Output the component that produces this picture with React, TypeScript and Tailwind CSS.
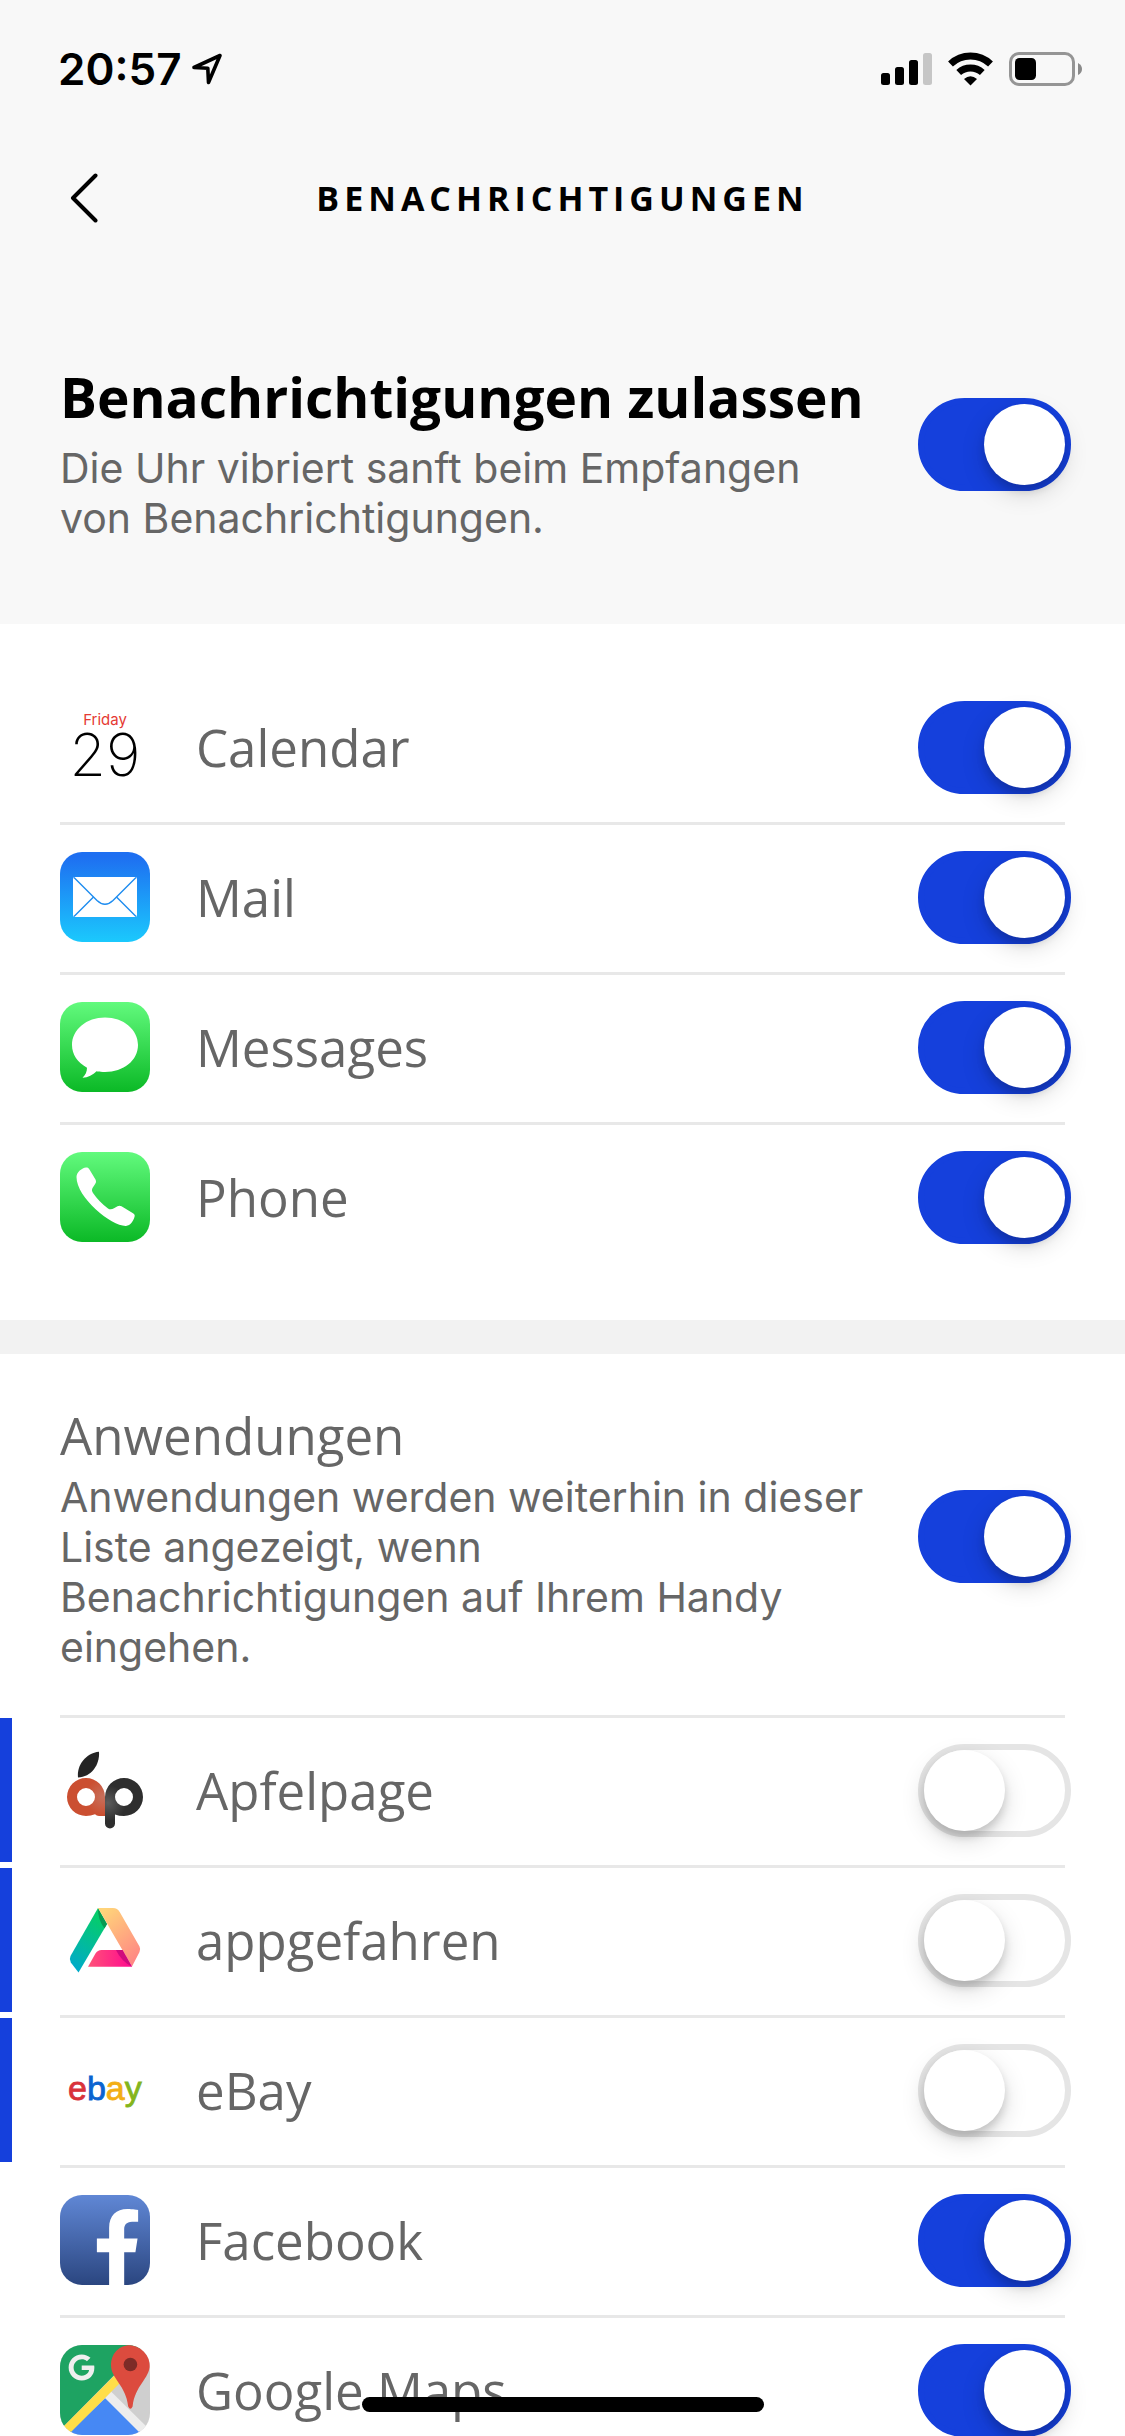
import React, { useState } from 'react';
import { FaFacebookF, FaGoogle } from 'react-icons/fa';

interface AppItem {
  id: string;
  name: string;
  icon: React.ReactNode;
  enabled: boolean;
  isNew?: boolean;
}

const CalendarIcon = () => (
  <svg viewBox="0 0 90 90" className="size-full">
    <text x="45" y="23" textAnchor="middle" fontSize="15" fill="#e53a33" fontFamily="Inter, sans-serif">Friday</text>
    <text x="45" y="74" textAnchor="middle" fontSize="59" fontWeight="200" fill="#000" fontFamily="Inter, sans-serif">29</text>
  </svg>
);

const MailIcon = () => (
  <svg viewBox="0 0 90 90" className="size-full">
    <defs>
      <linearGradient id="mail-bg" x1="0" y1="0" x2="0" y2="1">
        <stop offset="0.05" stopColor="#1e6ff1" />
        <stop offset="1" stopColor="#1bc9fd" />
      </linearGradient>
    </defs>
    <rect width="90" height="90" rx="22" fill="url(#mail-bg)" />
    <rect x="13" y="25" width="64" height="40" rx="2" fill="#fff" />
    <g fill="none" stroke="#1d8cf0" strokeWidth="1.4">
      <path d="M14 25.5 37 48.5Q45 56 53 48.5L76 25.5" />
      <path d="M14 64.5 33.5 45M76 64.5 56.5 45" />
    </g>
  </svg>
);

const MessagesIcon = () => (
  <svg viewBox="0 0 90 90" className="size-full">
    <defs>
      <linearGradient id="messages-bg" x1="0" y1="0" x2="0" y2="1">
        <stop offset="0" stopColor="#62fa7d" />
        <stop offset="1" stopColor="#0bb926" />
      </linearGradient>
    </defs>
    <rect width="90" height="90" rx="22" fill="url(#messages-bg)" />
    <path
      d="M45 15.5C63.500 15.500 78 27.500 78 43S63.500 70 45 70C42 70 39.500 69.800 36.500 69.200C33 72.500 28 75.500 22.500 75.800C25.500 73 27 69.500 27 65.700C17.500 60.500 12 52.500 12 43C12 27.500 26.500 15.500 45 15.500Z"
      fill="#fff"
    />
  </svg>
);

const PhoneIcon = () => (
  <svg viewBox="0 0 90 90" className="size-full">
    <defs>
      <linearGradient id="phone-bg" x1="0" y1="0" x2="0" y2="1">
        <stop offset="0" stopColor="#62fa7d" />
        <stop offset="1" stopColor="#0bb926" />
      </linearGradient>
    </defs>
    <rect width="90" height="90" rx="22" fill="url(#phone-bg)" />
    <path
      d="M16.500 25C16.500 20 22 16 26 15.500C27.500 15.300 28.500 16 29.300 17.200L35.500 27.500C36.500 29.500 36 31 34.800 32.500L32.500 36C31.500 38 32 39.500 33 41C37 47 42 52 48 56.500C50 57.800 52 57.500 54 56.200L57.500 54.200C59 53.500 60 53.500 61.500 54.200L73 61.200C74.500 62.200 75 63 74.600 64.500C73.500 69 70.500 73.500 66 73.900C52 74.500 16.500 46 16.500 25Z"
      fill="#fff"
    />
  </svg>
);

const ApfelpageIcon = () => (
  <svg viewBox="0 0 90 90" className="size-full">
    <defs>
      <radialGradient id="ap-red" gradientUnits="userSpaceOnUse" cx="43" cy="52" r="18">
        <stop offset="0" stopColor="#c7705c" />
        <stop offset="1" stopColor="#cb4f31" />
      </radialGradient>
      <radialGradient id="ap-dark" gradientUnits="userSpaceOnUse" cx="48" cy="58" r="18">
        <stop offset="0" stopColor="#5c5c5c" />
        <stop offset="1" stopColor="#2e2e2e" />
      </radialGradient>
    </defs>
    <path d="M18 32.500C16.500 20 26 8 39 6.700C40 20 31 32 18 32.500Z" fill="#242424" />
    <path
      fillRule="evenodd"
      fill="url(#ap-red)"
      d="M26 33A19 19 0 0 1 45 52V71H39Q36.500 71 35 69.200Q31 71 26 71A19 19 0 0 1 26 33ZM26 43A9 9 0 1 0 26 61A9 9 0 0 0 26 43Z"
    />
    <path
      fillRule="evenodd"
      fill="url(#ap-dark)"
      d="M64 33A19 19 0 1 1 64 71Q59 71 55 69.500V78.500A5 5 0 0 1 45 78.500V52A19 19 0 0 1 64 33ZM64 43A9 9 0 1 0 64 61A9 9 0 0 0 64 43Z"
    />
  </svg>
);

const AppgefahrenIcon = () => (
  <svg viewBox="0 0 90 90" className="size-full">
    <defs>
      <linearGradient id="ag-green" x1="0.7" y1="0" x2="0.3" y2="1">
        <stop offset="0.1" stopColor="#05cc6b" />
        <stop offset="1" stopColor="#00abc8" />
      </linearGradient>
      <linearGradient id="ag-orange" x1="0.2" y1="0" x2="0.8" y2="1">
        <stop offset="0" stopColor="#ffd47a" />
        <stop offset="1" stopColor="#ff8484" />
      </linearGradient>
      <linearGradient id="ag-pink">
        <stop offset="0" stopColor="#ff5279" />
        <stop offset="1" stopColor="#ff0a8e" />
      </linearGradient>
    </defs>
    <path d="M38 13 47 29 18.500 77.500 10.800 67.500Q9 64.500 10.500 61Z" fill="url(#ag-green)" />
    <path d="M38 13 47 29 44.500 33.500Q37.500 24 38 13Z" fill="#089a52" />
    <path d="M38 13H53Q57.500 13 59.700 17L79.500 51.500Q80.800 54 79.500 57L72 71.500Z" fill="url(#ag-orange)" />
    <path d="M28 71.700 35.500 58.500Q37.500 55 41.500 55H62.500L72 71.700Z" fill="url(#ag-pink)" />
    <path d="M56 55H62.500L72 71.700Q61 66 56 55Z" fill="#cf0b7c" />
  </svg>
);

const EbayIcon = () => (
  <svg viewBox="0 0 90 90" className="size-full">
    <text x="8" y="55" fontSize="34" strokeWidth="0.8" fontFamily="'Liberation Sans', Arial, sans-serif">
      <tspan fill="#d9323a" stroke="#d9323a">e</tspan>
      <tspan fill="#0a64d0" stroke="#0a64d0">b</tspan>
      <tspan fill="#f3ae14" stroke="#f3ae14">a</tspan>
      <tspan fill="#84b51c" stroke="#84b51c">y</tspan>
    </text>
  </svg>
);

const FacebookIcon = () => (
  <svg viewBox="0 0 90 90" className="size-full">
    <defs>
      <linearGradient id="fb-bg" x1="0" y1="0" x2="0" y2="1">
        <stop offset="0" stopColor="#6087d5" />
        <stop offset="1" stopColor="#2b4680" />
      </linearGradient>
    </defs>
    <rect width="90" height="90" rx="22" fill="url(#fb-bg)" />
    <FaFacebookF x="19" y="14" size={77} color="#fff" />
  </svg>
);

const MapsIcon = () => (
  <svg viewBox="0 0 90 90" className="size-full">
    <defs>
      <clipPath id="maps-clip">
        <rect width="90" height="90" rx="22" />
      </clipPath>
    </defs>
    <g clipPath="url(#maps-clip)">
      <rect width="90" height="90" fill="#cfcfcf" />
      <path d="M0 0H84L5 80 0 85Z" fill="#1ea362" />
      <path d="M45.500 53 90 96H0Z" fill="#4688f4" />
      <path d="M45 53 51 46.500 92 87V98H90Z" fill="#ededed" />
      <path d="M0 85 56 29 61 37 4 94Z" fill="#ffde48" />
      <path d="M70.400 0A19.300 19.300 0 0 1 89.700 20C89.700 34 75 40 72.600 61.500Q70.400 66 68.200 61.500C66 40 51 34 51 20A19.300 19.300 0 0 1 70.400 0Z" fill="#dc4b3e" />
      <circle cx="70.400" cy="19.500" r="6.800" fill="#7d2b27" />
      <FaGoogle x="8" y="9" size={27} color="#efefef" />
    </g>
  </svg>
);

const LocationIcon = () => (
  <svg viewBox="0 0 30 32" className="h-8 w-[30px]" fill="none" stroke="#000" strokeWidth="3.600" strokeLinejoin="round">
    <path d="M2 14.500 28 2.500 16.500 29.500 15.800 15.200Z" />
  </svg>
);

const SignalIcon = () => (
  <svg viewBox="0 0 51 34" className="h-[34px] w-[51px]">
    <rect x="0" y="21" width="9" height="12" rx="2.500" />
    <rect x="14" y="15" width="9" height="18" rx="2.500" />
    <rect x="28" y="8" width="9" height="25" rx="2.500" />
    <rect x="42" y="1" width="9" height="32" rx="2.500" fill="#c6c6c6" />
  </svg>
);

const WifiIcon = () => (
  <svg viewBox="0 0 45 34" className="h-[34px] w-[45px]">
    <g fill="none" stroke="#000" strokeWidth="7">
      <path d="M2.500 12A29 29 0 0 1 42.500 12" />
      <path d="M10.700 20.500A17.500 17.500 0 0 1 34.300 20.500" />
    </g>
    <path d="M16 27Q22.500 21.500 29 27L22.500 33.500Z" />
  </svg>
);

const BatteryIcon = () => (
  <svg viewBox="0 0 73 34" className="h-[34px] w-[73px]">
    <rect x="1.500" y="1.500" width="63" height="31" rx="8.500" fill="none" stroke="#959595" strokeWidth="3" />
    <rect x="6" y="6" width="21" height="22" rx="4.500" />
    <path d="M69 11Q73 13 73 17T69 23Z" fill="#8a8a8a" />
  </svg>
);

const systemApps: AppItem[] = [
  { id: 'calendar', name: 'Calendar', icon: <CalendarIcon />, enabled: true },
  { id: 'mail', name: 'Mail', icon: <MailIcon />, enabled: true },
  { id: 'messages', name: 'Messages', icon: <MessagesIcon />, enabled: true },
  { id: 'phone', name: 'Phone', icon: <PhoneIcon />, enabled: true },
];

const otherApps: AppItem[] = [
  { id: 'apfelpage', name: 'Apfelpage', icon: <ApfelpageIcon />, enabled: false, isNew: true },
  { id: 'appgefahren', name: 'appgefahren', icon: <AppgefahrenIcon />, enabled: false, isNew: true },
  { id: 'ebay', name: 'eBay', icon: <EbayIcon />, enabled: false, isNew: true },
  { id: 'facebook', name: 'Facebook', icon: <FacebookIcon />, enabled: true },
  { id: 'maps', name: 'Google Maps', icon: <MapsIcon />, enabled: true },
];

const Toggle: React.FC<{ id: string; initial: boolean }> = ({ id, initial }) => {
  const [on, setOn] = useState(initial);

  return (
    <input
      id={id}
      type="checkbox"
      role="switch"
      checked={on}
      onChange={() => setOn(!on)}
      className="-mr-1.5 h-[93px] w-[153px] shrink-0 cursor-pointer appearance-none rounded-full border-6 border-[#e5e5e5] bg-white before:block before:size-[81px] before:rounded-full before:bg-white before:shadow-[0_9px_24px_rgba(0,0,0,0.15),0_6px_9px_rgba(0,0,0,0.14)] checked:border-[#1540dc] checked:bg-[#1540dc] checked:before:translate-x-[60px]"
    />
  );
};

const AppRow: React.FC<{ item: AppItem }> = ({ item }) => (
  <li className="group relative px-[60px]">
    {item.isNew && <span className="absolute top-0 left-0 h-36 w-3 bg-[#1540dc]" />}
    <div className="flex h-[150px] items-center border-b-3 border-[#e8e8e8] pb-[3px] group-last:border-transparent">
      <span className="size-[90px] shrink-0">{item.icon}</span>
      <label htmlFor={item.id} className="ml-[46px] flex-1 text-[51px] leading-[68px] text-[#666]">{item.name}</label>
      <Toggle id={item.id} initial={item.enabled} />
    </div>
  </li>
);

const App: React.FC = () => (
  <div className="relative h-screen overflow-hidden bg-white font-['Open_Sans',sans-serif]">
    <div className="h-full overflow-y-auto [scrollbar-width:none]">
      <header className="bg-[#f8f8f8]">
        <div className="flex h-[132px] items-center justify-between pt-1.5 pr-[43px] pl-[58px]">
          <div className="flex items-center gap-2.5 font-['Inter',sans-serif] text-[44px] font-semibold text-black">
            <span>20:57</span>
            <LocationIcon />
          </div>
          <div className="flex items-center gap-4">
            <SignalIcon />
            <WifiIcon />
            <BatteryIcon />
          </div>
        </div>

        <div className="grid h-[132px] grid-cols-[100px_1fr_100px] items-center px-[60px]">
          <button type="button" aria-label="Zurück" className="flex h-20 items-center pl-2.5">
            <svg viewBox="0 0 28 50" className="h-[50px] w-7" fill="none" stroke="#000" strokeWidth="4" strokeLinecap="round" strokeLinejoin="round">
              <path d="M25.500 2.500 3 25 25.500 47.500" />
            </svg>
          </button>
          <h1 className="text-center text-[34px] leading-[48px] font-bold tracking-[5px] text-black">BENACHRICHTIGUNGEN</h1>
        </div>

        <div className="flex h-[360px] items-center px-[60px]">
          <div className="flex-1 pt-2.5">
            <label htmlFor="allow" className="mb-1 block text-[55px] leading-[84px] font-bold text-black">Benachrichtigungen zulassen</label>
            <p className="max-w-[810px] font-['Inter',sans-serif] text-[41px] leading-[50px] text-[#666]">
              Die Uhr vibriert sanft beim Empfangen von Benachrichtigungen.
            </p>
          </div>
          <Toggle id="allow" initial={true} />
        </div>
      </header>

      <ul className="pt-[51px] pb-[45px]">
        {systemApps.map((item) => <AppRow key={item.id} item={item} />)}
      </ul>

      <div className="h-[34px] bg-[#f2f2f2]" />

      <section>
        <div className="px-[60px]">
          <div className="flex h-[364px] items-center border-b-3 border-[#e8e8e8] pt-[3px]">
            <div className="flex-1">
              <label htmlFor="apps" className="mb-[3px] block text-[51px] leading-[68px] text-[#666]">Anwendungen</label>
              <p className="max-w-[810px] font-['Inter',sans-serif] text-[41px] leading-[50px] text-[#666]">
                Anwendungen werden weiterhin in dieser Liste angezeigt, wenn Benachrichtigungen auf Ihrem Handy eingehen.
              </p>
            </div>
            <Toggle id="apps" initial={true} />
          </div>
        </div>
        <ul>
          {otherApps.map((item) => <AppRow key={item.id} item={item} />)}
        </ul>
      </section>
    </div>

    {/* home indicator */}
    <div className="absolute bottom-6 left-1/2 h-[15px] w-[402px] -translate-x-1/2 rounded-full bg-black" />
  </div>
);

export default App;
